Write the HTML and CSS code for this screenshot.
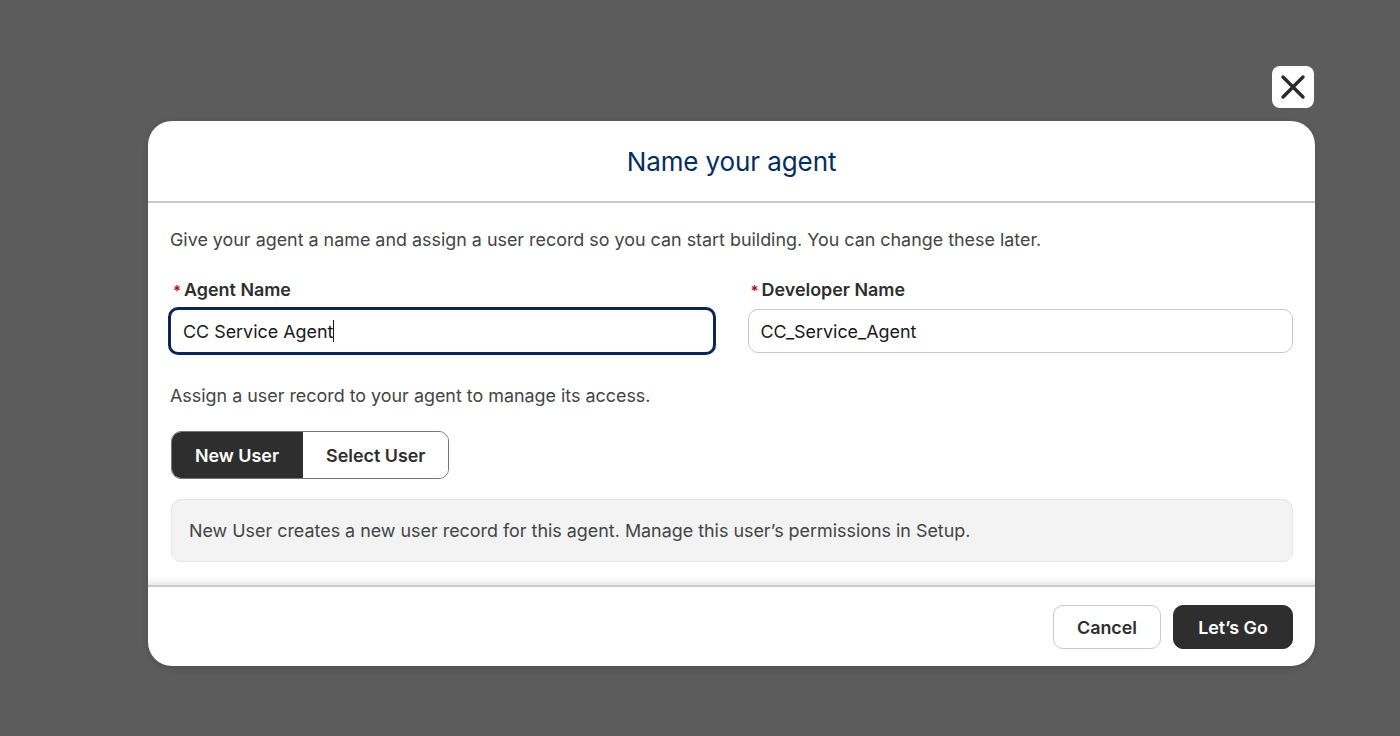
FILE: index.html
```html
<!DOCTYPE html>
<html>
<head>
<meta charset="utf-8">
<link rel="stylesheet" href="styles.css">
</head>
<body>
<div class="backdrop">
  <div class="modal-wrap">
    <div class="close-row">
      <button class="close-btn" aria-label="Close">
        <svg width="26" height="26" viewBox="0 0 26 26"><path d="M3 3L23 23M23 3L3 23" stroke="#2b2b2b" stroke-width="3.4" stroke-linecap="round"/></svg>
      </button>
    </div>
    <div class="modal">
      <div class="modal-header">
        <h1 class="title">Name your agent</h1>
      </div>
      <div class="modal-body">
        <p class="intro">Give your agent a name and assign a user record so you can start building. You can change these later.</p>
        <div class="fields">
          <div class="field">
            <label class="label"><span class="req">*</span>Agent Name</label>
            <div class="input focused">CC Service Agent<span class="caret"></span></div>
          </div>
          <div class="field">
            <label class="label"><span class="req">*</span>Developer Name</label>
            <div class="input">CC_Service_Agent</div>
          </div>
        </div>
        <p class="assign">Assign a user record to your agent to manage its access.</p>
        <div class="seg">
          <button class="seg-btn active">New User</button>
          <button class="seg-btn">Select User</button>
        </div>
        <div class="info">New User creates a new user record for this agent. Manage this user’s permissions in Setup.</div>
      </div>
      <div class="modal-footer">
        <button class="btn neutral">Cancel</button>
        <button class="btn brand">Let’s Go</button>
      </div>
    </div>
  </div>
</div>
</body>
</html>
```

FILE: styles.css
```css
* { box-sizing: border-box; }
html, body { margin: 0; padding: 0; }
body {
  font-family: Inter, "Noto Sans", sans-serif;
  background: #5c5c5c;
  width: 1400px;
  height: 736px;
  overflow: hidden;
}
.backdrop {
  width: 1400px;
  height: 736px;
  padding-top: 66px;
  padding-left: 148px;
}
.modal-wrap {
  width: 1167px;
  display: flex;
  flex-direction: column;
}
.close-row {
  display: flex;
  justify-content: flex-end;
  padding-right: 1px;
  height: 55px;
}
.close-btn {
  width: 42px;
  height: 42px;
  border: none;
  border-radius: 8px;
  background: #fff;
  display: flex;
  align-items: center;
  justify-content: center;
  padding: 0;
}
.modal {
  background: #fff;
  border-radius: 24px;
  overflow: hidden;
  box-shadow: 0 2px 6px rgba(0,0,0,0.15);
}
.modal-header {
  height: 82px;
  border-bottom: 2px solid #c9c9c9;
  display: flex;
  align-items: center;
  justify-content: center;
  padding-top: 0;
}
.title {
  margin: 0;
  font-size: 26px;
  font-weight: 400;
  color: #032d60;
  letter-spacing: -0.1px;
}
.modal-body {
  padding: 25px 22px 23px 22px;
  color: #444;
  position: relative;
  box-shadow: inset 0 -12px 10px -10px rgba(0,0,0,0.12);
}
.intro {
  margin: 0 0 26px 0;
  font-size: 17.9px;
  line-height: 24px;
  color: #444;
}
.fields {
  display: grid;
  grid-template-columns: 1fr 1fr;
  column-gap: 32px;
}
.field { display: flex; flex-direction: column; }
.label {
  font-size: 17.9px;
  font-weight: 600;
  color: #2e2e2e;
  line-height: 24px;
  margin-bottom: 6px;
  padding-left: 3px;
}
.req { color: #ba0517; margin-right: 3px; font-size: 15px; }
.input {
  height: 44px;
  border: 1.5px solid #c9c9c9;
  border-radius: 10px;
  display: flex;
  align-items: center;
  padding: 0 12px;
  font-size: 17.9px;
  color: #181818;
}
.input.focused {
  border: 3px solid #0b2556;
  height: 48px;
  margin-top: -2px;
  margin-left: -2px;
  margin-right: 0;
}
.caret {
  display: inline-block;
  width: 1px;
  height: 22px;
  background: #181818;
}
.assign {
  margin: 29px 0 23px 0;
  font-size: 17.9px;
  line-height: 24px;
  color: #444;
}
.seg {
  display: inline-flex;
  border: 1.5px solid #747474;
  border-radius: 10px;
  overflow: hidden;
  height: 48px;
  margin-left: 1px;
}
.seg-btn {
  font-family: inherit;
  font-size: 17.9px;
  font-weight: 600;
  border: none;
  background: #fff;
  color: #2e2e2e;
  padding: 0 23px;
  white-space: nowrap;
}
.seg-btn.active {
  background: #2e2e2e;
  color: #fff;
  width: 131px;
  padding: 0;
  border-right: 1.5px solid #2e2e2e;
}
.info {
  margin-top: 20px;
  margin-left: 1px;
  background: #f3f3f3;
  border: 1px solid #e5e5e5;
  border-radius: 10px;
  height: 63px;
  display: flex;
  align-items: center;
  padding: 0 17px;
  font-size: 17.9px;
  color: #444;
}
.modal-footer {
  border-top: 2px solid #c9c9c9;
  height: 81px;
  display: flex;
  align-items: center;
  justify-content: flex-end;
  gap: 12px;
  padding: 1px 22px 0 0;
}
.btn {
  font-family: inherit;
  font-size: 17.9px;
  font-weight: 600;
  height: 44px;
  border-radius: 10px;
  padding: 0;
  white-space: nowrap;
}
.btn.neutral {
  background: #fff;
  border: 1.5px solid #c9c9c9;
  color: #2e2e2e;
  width: 108px;
}
.btn.brand {
  background: #2e2e2e;
  border: 1.5px solid #2e2e2e;
  color: #fff;
  width: 120px;
}
```
